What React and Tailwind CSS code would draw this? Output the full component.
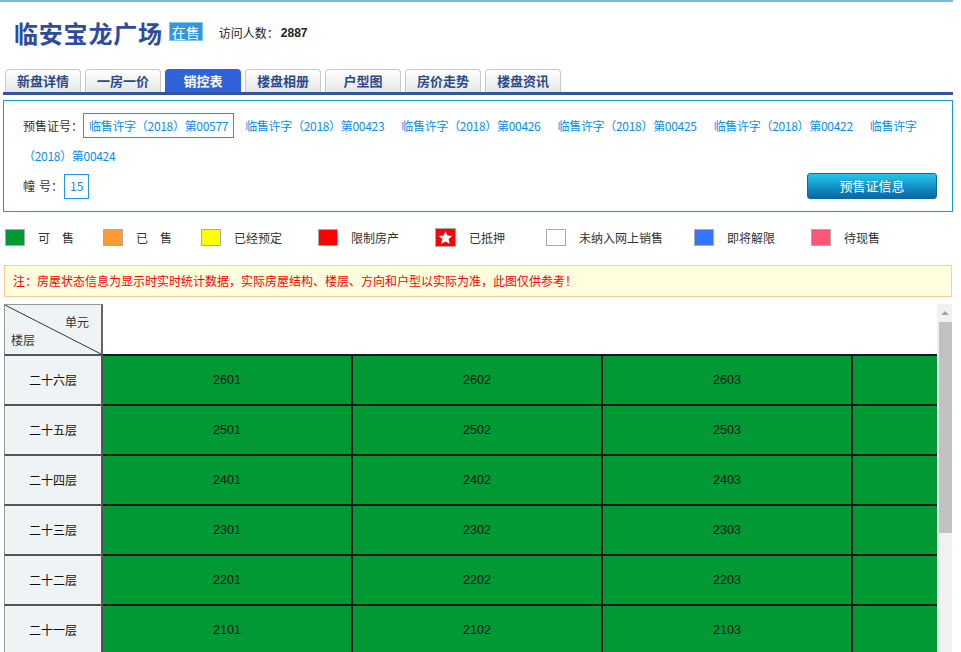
import React from 'react';

const tabs = ['新盘详情', '一房一价', '销控表', '楼盘相册', '户型图', '房价走势', '楼盘资讯'];

const links = [
  '临售许字（2018）第00577',
  '临售许字（2018）第00423',
  '临售许字（2018）第00426',
  '临售许字（2018）第00425',
  '临售许字（2018）第00422',
  '临售许字（2018）第00424',
];

const legend = [
  { label: '可　售', swatch: 'bg-[#009933]', w: 'w-[98px]' },
  { label: '已　售', swatch: 'bg-[#ff9933]', w: 'w-[98px]' },
  { label: '已经预定', swatch: 'bg-[#ffff00]', w: 'w-[117px]' },
  { label: '限制房产', swatch: 'bg-[#ff0000]', w: 'w-[117px]' },
  { label: '已抵押', swatch: 'star', w: 'w-[111px]' },
  { label: '未纳入网上销售', swatch: 'bg-white', w: 'w-[148px]' },
  { label: '即将解限', swatch: 'bg-[#3377ff]', w: 'w-[117px]' },
  { label: '待现售', swatch: 'bg-[#ff5577]', w: 'w-[100px]' },
];

const floors = [
  { name: '二十六层', n: 26 },
  { name: '二十五层', n: 25 },
  { name: '二十四层', n: 24 },
  { name: '二十三层', n: 23 },
  { name: '二十二层', n: 22 },
  { name: '二十一层', n: 21 },
  { name: '二十层', n: 20 },
];

const Swatch = ({ type }) => {
  if (type === 'star') {
    return (
      <span className="w-[21px] h-[19px] border border-[#aaa] bg-[#ff0000] flex items-center justify-center shrink-0">
        <svg width="15" height="15" viewBox="0 0 24 24">
          <path d="M12 1.5l3.1 7.2 7.8.7-5.9 5.1 1.8 7.7L12 18.2l-6.8 4 1.8-7.7-5.9-5.1 7.8-.7z" fill="#fff" />
        </svg>
      </span>
    );
  }
  return <span className={`w-[20px] h-[17px] border border-[#aaa] shrink-0 ${type}`} />;
};

export default function App() {
  return (
    <div className="h-[652px] overflow-hidden bg-white text-[#333] font-['Noto_Sans_CJK_SC','Liberation_Sans',sans-serif]">
      {/* top line */}
      <div className="h-[2px] w-[953px] bg-[#7cb8dc]" />

      {/* title */}
      <div className="flex items-center h-[62px] pl-[14px]">
        <h1 className="text-[24px] font-bold tracking-[0.8px] text-[#2d4d9c] leading-none">临安宝龙广场</h1>
        <span className="ml-[6px] h-[19px] px-[2px] flex items-center border border-[#7ccaf2] bg-[#3596dc] text-white text-[14px] leading-none -mt-[3px]">
          在售
        </span>
        <span className="ml-[16px] text-[12px] text-[#222]">访问人数：</span>
        <span className="ml-[2px] text-[12px] font-bold text-[#222] font-['Liberation_Sans',sans-serif]">2887</span>
      </div>

      {/* tabs */}
      <div className="flex gap-[4px] pl-[5px] mt-[5px] h-[23px]">
        {tabs.map((t) => (
          <div
            key={t}
            className={`w-[76px] h-[23px] rounded-t-[4px] flex items-center justify-center text-[13px] font-bold ${
              t === '销控表'
                ? 'bg-[#3062dc] text-white'
                : 'border border-b-0 border-[#c9c9c9] bg-linear-to-b from-white to-[#e6e6e6] text-[#2a4a8c]'
            }`}
          >
            {t}
          </div>
        ))}
      </div>
      <div className="ml-[3px] w-[950px] h-[3px] bg-[#34559a]" />

      {/* presale info */}
      <div className="ml-[3px] mt-[5px] w-[950px] border border-[#1a98cc] pt-[10px] pb-[10px] pl-[19px] pr-[20px] text-[12px]">
        <div className="leading-[30px]">
          <span>预售证号：</span>
          {links.map((l, i) => (
            <span
              key={l}
              className={`py-[3px] px-[5px] mr-[5px] border tracking-[-0.3px] text-[#0b8fe6] ${
                i === 0 ? 'border-[#1d9be0]' : 'border-transparent'
              }`}
            >
              {l}
            </span>
          ))}
        </div>
        <div className="flex items-center justify-between h-[30px]">
          <div className="flex items-center">
            <span>幢</span>
            <span className="ml-[4px]">号：</span>
            <span className="ml-[1px] h-[25px] px-[5px] flex items-center border border-[#1d9be0] text-[#0b8fe6]">15</span>
          </div>
          <button className="mr-[-5px] w-[130px] h-[26px] rounded-[3px] border border-[#0b6aa4] bg-linear-to-b from-[#25c6ee] to-[#0966a6] text-white text-[13px]">
            预售证信息
          </button>
        </div>
      </div>

      {/* legend */}
      <div className="flex items-center pl-[5px] mt-[16px] h-[19px] text-[12px]">
        {legend.map((it) => (
          <div key={it.label} className={`flex items-center shrink-0 ${it.w}`}>
            <Swatch type={it.swatch} />
            <span className="ml-[13px]">{it.label}</span>
          </div>
        ))}
      </div>

      {/* note */}
      <div className="ml-[4px] mt-[18px] w-[948px] h-[32px] flex items-center pl-[8px] border border-[#ffcc99] bg-[#ffffe0] text-[12px] text-[#ff0000]">
        注：房屋状态信息为显示时实时统计数据，实际房屋结构、楼层、方向和户型以实际为准，此图仅供参考！
      </div>

      {/* sales table */}
      <div className="ml-[4px] mt-[7px] w-[948px] h-[348px] flex">
        <div className="w-[933px] overflow-hidden text-[12px]">
          <div className="flex h-[50px]">
            <div className="relative w-[99px] shrink-0 border-t border-l border-[#999] border-r-2 border-r-[#666] bg-[#eef3f5]">
              <svg className="absolute inset-0 w-full h-full" viewBox="0 0 100 100" preserveAspectRatio="none">
                <line x1="0" y1="0" x2="100" y2="100" stroke="#333" strokeWidth="1" vectorEffect="non-scaling-stroke" />
              </svg>
              <span className="absolute right-[12px] top-[8px]">单元</span>
              <span className="absolute left-[6px] bottom-[5px]">楼层</span>
            </div>
            <div className="flex-1" />
          </div>
          {floors.map((f) => (
            <div key={f.n} className="flex h-[50px]">
              <div className="w-[99px] shrink-0 flex items-center justify-center border-t-2 border-t-[#555] border-l border-l-[#999] border-r-2 border-r-[#555] bg-[#eef3f5] text-[#111]">
                {f.name}
              </div>
              {[1, 2, 3, 4].map((u) => (
                <div
                  key={u}
                  className="w-[250px] shrink-0 flex items-center justify-center pt-[1px] bg-[#009933] border-t-2 border-r-2 border-[#1a1a1a] text-[#111] text-[12.5px] font-['Liberation_Sans',sans-serif]"
                >
                  {u < 4 ? `${f.n}0${u}` : ''}
                </div>
              ))}
            </div>
          ))}
        </div>
        {/* scrollbar */}
        <div className="w-[15px] shrink-0 bg-[#f1f1f1] flex flex-col">
          <div className="h-[18px] flex items-center justify-center">
            <span className="w-0 h-0 border-l-[4px] border-r-[4px] border-b-[4px] border-l-transparent border-r-transparent border-b-[#a3a3a3]" />
          </div>
          <div className="ml-[2px] w-[13px] h-[211px] bg-[#c1c1c1]" />
        </div>
      </div>
    </div>
  );
}
